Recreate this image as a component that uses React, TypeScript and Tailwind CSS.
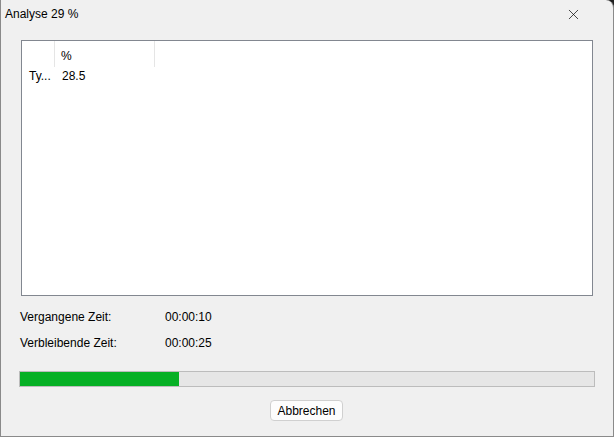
import { X } from "lucide-react";

export default function App() {
  return (
    <div className="h-[437px] w-[614px] bg-[#202020]">
      <div
        className="flex h-[437px] w-[614px] flex-col rounded-tr-[8px] border-x border-b border-[#8a8a8a] bg-[#f0f0f0] text-[12px] text-black"
        style={{ fontFamily: '"Liberation Sans", "Noto Sans", sans-serif' }}
      >
        <div className="flex h-[28px] items-center justify-between pl-[4px] pr-[31px]">
          <span className="leading-none">Analyse 29 %</span>
          <X className="h-[17px] w-[17px]" strokeWidth={1} />
        </div>

        <div className="ml-[20px] mt-[12px] h-[256px] w-[572px] border border-[#828790] bg-white">
          <div className="flex h-[26px]">
            <div className="w-[33px] border-r border-[#e5e5e5]" />
            <div className="flex w-[100px] items-center border-r border-[#e5e5e5] pl-[6px] pt-[3px]">%</div>
          </div>
          <div className="flex h-[18px] items-center">
            <div className="w-[34px] pl-[7px]">Ty...</div>
            <div className="pl-[6px]">28.5</div>
          </div>
        </div>

        <div className="ml-[19px] mt-[13px] flex flex-col gap-[10px]">
          <div className="flex h-[16px] items-center">
            <span className="w-[145px]">Vergangene Zeit:</span>
            <span>00:00:10</span>
          </div>
          <div className="flex h-[16px] items-center">
            <span className="w-[145px]">Verbleibende Zeit:</span>
            <span>00:00:25</span>
          </div>
        </div>

        <div className="ml-[18px] mt-[20px] h-[16px] w-[576px] border border-[#bcbcbc] bg-[#e6e6e6]">
          <div className="h-full w-[159px] bg-[#06b025]" />
        </div>

        <div className="mt-[13px] flex justify-center pr-[1px]">
          <button className="h-[21px] w-[73px] rounded-[4px] border border-[#d0d0d0] bg-[#fdfdfd] text-[12px] leading-none">
            Abbrechen
          </button>
        </div>
      </div>
    </div>
  );
}
